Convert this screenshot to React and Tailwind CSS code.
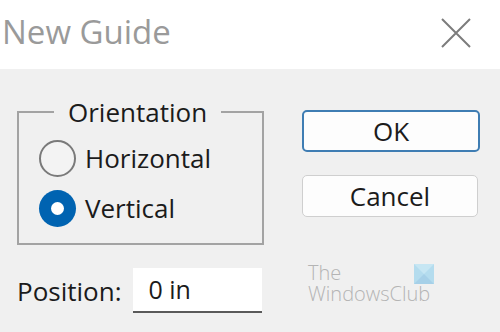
import React from 'react'

const font = { fontFamily: '"Open Sans", "Noto Sans", sans-serif' }

function Radio({ label, checked }) {
  return (
    <div className="flex items-center h-[40px]">
      {checked ? (
        <span className="w-[37px] h-[37px] rounded-full bg-[#0063b1] flex items-center justify-center">
          <span className="w-[13px] h-[13px] rounded-full bg-white" />
        </span>
      ) : (
        <span className="w-[37px] h-[37px] rounded-full border-2 border-[#7a7a7a] bg-[#f3f3f3]" />
      )}
      <span className="ml-[9px] text-[26px] text-[#1b1b1b] leading-none">{label}</span>
    </div>
  )
}

export default function App() {
  return (
    <div className="w-[500px] h-[332px] bg-[#f0f0f0] overflow-hidden" style={font}>
      <div className="h-[69px] bg-white flex items-start justify-between pl-[2px] pr-[29px] pt-[9px]">
        <span className="text-[33px] leading-[45px] text-[#9a9a9a]">New Guide</span>
        <svg width="30" height="30" viewBox="0 0 30 30" className="mt-[9px]">
          <path d="M1 1 L29 29 M29 1 L1 29" stroke="#7c7c7c" strokeWidth="2" fill="none" />
        </svg>
      </div>

      <div className="flex pl-[17px] pt-[28px]">
        <div className="w-[247px] flex flex-col">
          <fieldset className="border-2 border-[#a3a3a3] px-0 pt-[11px] pb-[13px] h-[148px]">
            <legend className="ml-[35px] px-[14px] text-[26px] leading-[30px] text-[#1b1b1b]">
              Orientation
            </legend>
            <div className="pl-[20px] flex flex-col gap-[10px]">
              <Radio label="Horizontal" />
              <Radio label="Vertical" checked />
            </div>
          </fieldset>
          <div className="flex items-center mt-[23px]">
            <span className="text-[26px] text-[#1b1b1b] leading-none pt-[1px]">Position:</span>
            <div className="ml-[12px] w-[129px] h-[45px] bg-white border-b-2 border-[#5a5a5a] flex items-center pl-[15px]">
              <span className="text-[25px] text-[#1b1b1b] leading-none">0 in</span>
            </div>
          </div>
        </div>

        <div className="ml-[38px] w-[178px] flex flex-col pt-[13px]">
          <button className="h-[42px] rounded-[5px] border-2 border-[#3f7db3] bg-[#fdfdfd] text-[26px] text-[#1b1b1b] leading-none">
            OK
          </button>
          <button className="mt-[23px] h-[42px] w-[176px] rounded-[5px] border border-[#cfcfcf] bg-[#fdfdfd] text-[26px] text-[#1b1b1b] leading-none">
            Cancel
          </button>
          <div className="mt-[45px] ml-[6px] relative w-[126px] text-[#b4b4b4] font-light text-[20px] leading-[21px]">
            <p>
              The
              <br />
              WindowsClub
            </p>
            <svg width="20" height="20" viewBox="0 0 20 20" className="absolute right-0 top-[2px]">
              <rect width="20" height="20" fill="#b4dcee" />
              <path d="M0 0 L10 10 L20 0 Z" fill="#c6e6f3" />
              <path d="M0 20 L10 10 L20 20 Z" fill="#a6d0e8" />
            </svg>
          </div>
        </div>
      </div>
    </div>
  )
}
